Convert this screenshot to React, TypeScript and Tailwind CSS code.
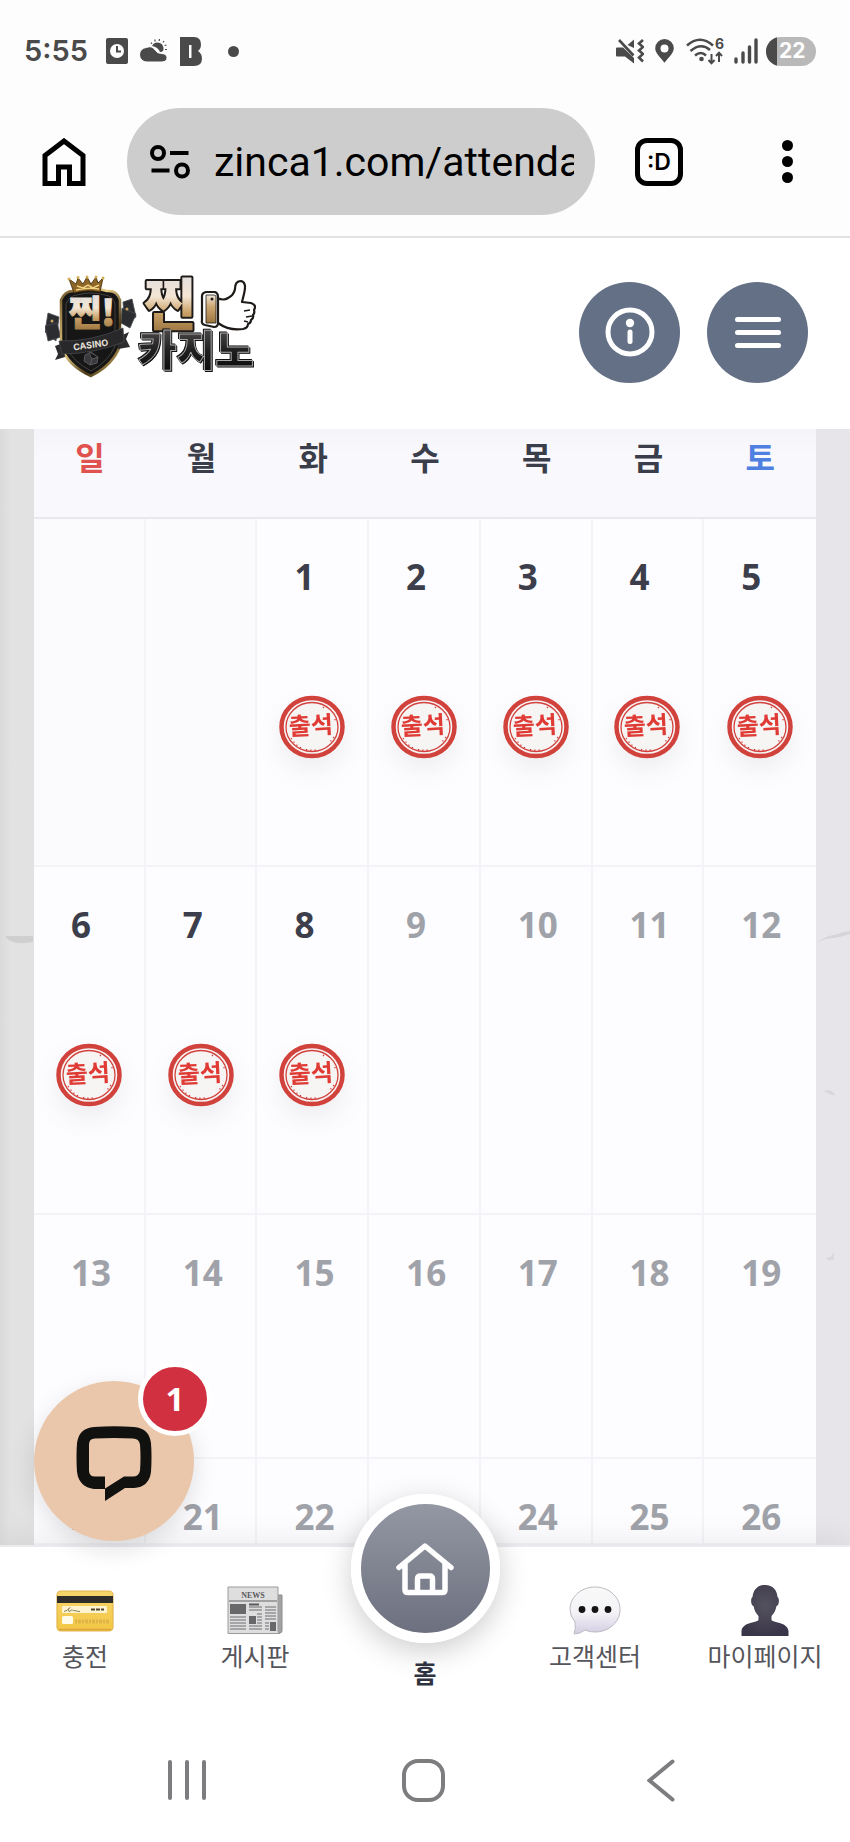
import type { ReactNode } from "react";

type Day = {
  label: string;
  past?: boolean;
  stamped?: boolean;
};

const weekdays = [
  { label: "일", color: "text-[#e0524f]" },
  { label: "월", color: "text-[#3a3d4a]" },
  { label: "화", color: "text-[#3a3d4a]" },
  { label: "수", color: "text-[#3a3d4a]" },
  { label: "목", color: "text-[#3a3d4a]" },
  { label: "금", color: "text-[#3a3d4a]" },
  { label: "토", color: "text-[#4f7fe0]" },
];

const LAST_STAMPED_DAY = 8;

const buildWeek = (start: number): Day[] =>
  Array.from({ length: 7 }, (_, i) => {
    const day = start + i;
    if (day < 1) return { label: "" };
    return {
      label: String(day),
      past: day <= LAST_STAMPED_DAY,
      stamped: day <= LAST_STAMPED_DAY,
    };
  });

const weeks = [
  { days: buildWeek(-1), height: "h-[348px]" },
  { days: buildWeek(6), height: "h-[348px]" },
  { days: buildWeek(13), height: "h-[244px]" },
  { days: buildWeek(20), height: "h-[86px]" },
];

const StatusBar = () => (
  <div className="flex h-[102px] items-center justify-between pl-6 pr-[34px] text-[#4a4a4a]">
    <div className="flex items-center">
      <span className="w-[82px] font-['Inter',sans-serif] text-[29px] font-semibold leading-8">5:55</span>
      <svg className="h-[26px] w-[22px]" viewBox="0 0 22 26" fill="currentColor">
        <rect width="22" height="26" rx="2" />
        <circle cx="11" cy="13" r="7" fill="#fff" />
        <path d="M11 8v5.500h4" fill="none" stroke="currentColor" strokeWidth="2" />
      </svg>
      <svg className="ml-3 h-[26px] w-[28px]" viewBox="0 0 28 26" fill="currentColor">
        <path d="M12 8a6 6 0 0 1 11 5q-1 1-3 1-2-5-8-6z" />
        <path
          d="M11 4.500l1 1.500M15 1.500v2M19.500 1l-.3 2M24 3l-1 1.500M26.500 7l-2 .5M27 11.500h-2"
          stroke="currentColor"
          strokeWidth="1.200"
        />
        <path
          d="M7 24a7 7 0 0 1-.5-14.500Q12 7 15.500 12.500 17 15.500 22 15.500q5 .5 5 4.300T22 24z"
          stroke="#fdfdfd"
          strokeWidth="1"
        />
      </svg>
      <svg className="ml-3 h-[29px] w-[22px]" viewBox="0 0 22 29" fill="currentColor">
        <path
          fillRule="evenodd"
          d="M0 0h14q7 0 7 7.500 0 4-3 6.500 4 2.500 4 7.500 0 7.500-8 7.500H0zM9 8v13h2.500V8z"
        />
      </svg>
      <span className="ml-[26px] size-[11px] rounded-full bg-current" />
    </div>
    <div className="flex items-center">
      <svg className="h-[26px] w-[28px]" viewBox="0 0 28 26" fill="none" stroke="currentColor" strokeWidth="2.600">
        <path d="M1 9.500h6l11 10.500v5.500L9 18.500H1q-1 0-1-1v-7q0-1 1-1z" fill="currentColor" stroke="none" />
        <path d="M11.500 7L18 1.500V10z" fill="currentColor" stroke="none" />
        <path d="M3 2l14.500 15.500" />
        <path d="M27 2l-4 3.500 4 3.500-4 3.500 4 3.500-4 3.500 4 4" />
      </svg>
      <svg className="ml-[11px] h-6 w-[19px]" viewBox="0 0 19 24" fill="currentColor">
        <path
          fillRule="evenodd"
          d="M9.500 0a9.300 9.300 0 0 1 9.300 9.300c0 5-5 9-9.300 14.500C5.200 18.300.2 14.300.2 9.300A9.300 9.300 0 0 1 9.500 0zm0 5.500a4 4 0 1 0 0 8 4 4 0 0 0 0-8z"
        />
      </svg>
      <svg className="ml-3 h-9 w-10" viewBox="0 -4 40 36" fill="none" stroke="currentColor" strokeWidth="2.600">
        <path d="M1 8.500Q14-3 27 8.500M4.500 14Q15 5 24 13M9 18.500q6-5 11 0" />
        <circle cx="15.500" cy="22" r="2.300" fill="currentColor" stroke="none" />
        <path d="M25.500 17v9M22.500 23l3 3.300 3-3.300M33 25v-9M30 19l3-3.300 3 3.300" strokeWidth="2" />
        <text x="29" y="12" fill="currentColor" stroke="none" className="font-['Inter',sans-serif] text-[14px] font-bold">
          6
        </text>
      </svg>
      <svg
        className="ml-2 h-[26px] w-6"
        viewBox="0 0 24 26"
        stroke="currentColor"
        strokeWidth="3.400"
        strokeLinecap="round"
      >
        <path d="M2 24v-3M9 24v-9M15.500 24V9M22 24V2" />
      </svg>
      <div className="ml-2 flex h-[29px] w-[50px] items-center overflow-hidden rounded-full bg-[#b9b9b9]">
        <span className="h-full w-[11px] bg-[#4a4a4a]" />
        <span className="pl-[2px] font-['Inter',sans-serif] text-[21px] font-bold leading-7 text-white">22</span>
      </div>
    </div>
  </div>
);

const BrowserBar = () => (
  <div className="flex items-center border-b-2 border-[#e2e2e2] pb-[21px] pl-[42px] pr-[43px] pt-[6px] text-black">
    <button type="button" aria-label="Home">
      <svg className="h-12 w-11" viewBox="0 0 44 48" fill="none" stroke="currentColor" strokeWidth="5">
        <path d="M3 45.500V17.500L22 3l19 14.500v28H27.500V29h-11v16.500z" />
      </svg>
    </button>
    <div className="ml-[41px] flex h-[107px] min-w-0 flex-1 items-center rounded-full bg-[#cdcdcd] pl-[23px] pr-[21px]">
      <svg className="h-[34px] w-10 shrink-0" viewBox="0 0 40 34" fill="none" stroke="currentColor" strokeWidth="4">
        <circle cx="8" cy="8" r="6" />
        <path d="M20 8h18.500M1.500 25.500h18" />
        <circle cx="32" cy="25.500" r="6" />
      </svg>
      <input
        type="text"
        aria-label="Address"
        defaultValue="zinca1.com/attenda"
        className="ml-6 min-w-0 flex-1 bg-transparent font-['Roboto',sans-serif] text-[41px] leading-[52px] outline-none"
      />
    </div>
    <button
      type="button"
      aria-label="Tabs"
      className="ml-10 flex size-12 items-center justify-center rounded-[12px] border-[5px] border-black font-['Inter',sans-serif] text-[23px] font-semibold leading-6"
    >
      :D
    </button>
    <button type="button" aria-label="More" className="ml-[84px] flex w-10 flex-col items-center gap-[5px]">
      <span className="size-[11px] rounded-full bg-black" />
      <span className="size-[11px] rounded-full bg-black" />
      <span className="size-[11px] rounded-full bg-black" />
    </button>
  </div>
);

const Logo = () => (
  <svg className="h-32 w-[211px]" viewBox="0 -8 211 128" role="img" aria-label="찐카지노">
    <defs>
      <linearGradient id="gold" x1="0" y1="0" x2="0" y2="1">
        <stop offset="0.200" stopColor="#e3dedd" />
        <stop offset="0.450" stopColor="#f4e6d4" />
        <stop offset="0.650" stopColor="#c9a166" />
        <stop offset="0.850" stopColor="#a37c47" />
      </linearGradient>
      <linearGradient id="cuff" x1="0" y1="0" x2="0" y2="1">
        <stop offset="0" stopColor="#f0e6d8" />
        <stop offset="0.400" stopColor="#cda873" />
        <stop offset="1" stopColor="#9c743f" />
      </linearGradient>
      <linearGradient id="rim" x1="0" y1="0" x2="1" y2="1">
        <stop offset="0" stopColor="#6e5426" />
        <stop offset="0.400" stopColor="#e8cf86" />
        <stop offset="0.700" stopColor="#4a3818" />
        <stop offset="1" stopColor="#e3c06c" />
      </linearGradient>
      <linearGradient id="coal" x1="0" y1="0" x2="0" y2="1">
        <stop offset="0.200" stopColor="#4d4947" />
        <stop offset="0.550" stopColor="#1f1f20" />
        <stop offset="1" stopColor="#050505" />
      </linearGradient>
    </defs>
    {/* Playing cards */}
    <g fill="#2c2d31" stroke="#4b4c52" strokeWidth="0.800">
      <path d="M3 37l11 4-3 24-11-9z" />
      <path d="M0 50l12-3 4 14-13 4z" />
      <path d="M78 26l9-3 4 18-11 7z" />
      <path d="M77 32l14 6-6 14-9-5z" />
    </g>
    <circle cx="7" cy="45" r="1.500" fill="#c9a45c" />
    <circle cx="82" cy="33" r="1.500" fill="#c9a45c" />
    {/* Shield */}
    <path
      d="M16 24Q20 14 30 15q16-5 32 0 10-1 13 9v46Q68 89 46 100 22 89 16 70z"
      fill="#161616"
      stroke="url(#rim)"
      strokeWidth="2.500"
    />
    <path
      d="M21 28q4-9 11-9 14-4 28 0 8 1 10 9v42q-6 15-24 25Q27 85 21 70z"
      fill="none"
      stroke="#4f4c47"
      strokeWidth="0.800"
    />
    <path d="M29 17L24 3l7 5 2-6 5 6 4-7 4 7 5-7 2 6 5-5-3 14q-13-3-26 1z" fill="#8d6526" stroke="#3f290b" strokeWidth="0.800" />
    <path d="M31 14q12-3 23-1M32 10l6 2 5-3 5 3 6-3" fill="none" stroke="#f0d283" strokeWidth="1.500" />
    <g fill="#d4ad55">
      <circle cx="24" cy="3" r="1.500" />
      <circle cx="33" cy="1.500" r="1.500" />
      <circle cx="42" cy="1" r="1.500" />
      <circle cx="51" cy="1" r="1.500" />
      <circle cx="58" cy="2" r="1.500" />
    </g>
    <text
      x="24"
      y="50"
      fill="url(#gold)"
      stroke="url(#gold)"
      strokeWidth="1"
      className="font-['Noto_Sans_CJK_KR',sans-serif] text-[35px] font-black"
    >
      찐!
    </text>
    <path d="M10 70l8-3 2 14-10 3 3-6zM71 62l13-6-3 7 4 8-12 2z" fill="#2b2b2e" />
    <path d="M14 65Q46 66 78 52l1 14Q48 78 17 78z" fill="#28282b" stroke="#48484c" strokeWidth="0.800" />
    <text
      x="28"
      y="72"
      fill="#e6e0d6"
      transform="rotate(-8 46 68)"
      className="font-['Inter',sans-serif] text-[9px] font-bold"
    >
      CASINO
    </text>
    <path
      d="M40 79l6-3 7 5-1 6-7 2-6-4zM44 77l3 6 6-2M47 83l-2 6"
      fill="#3a3a3e"
      stroke="#65656a"
      strokeWidth="0.800"
    />
    {/* Wordmark */}
    <text
      x="99"
      y="49"
      fill="url(#gold)"
      stroke="#1d1a18"
      strokeWidth="4"
      strokeLinejoin="round"
      className="font-['Noto_Sans_CJK_KR',sans-serif] text-[56px] font-black [paint-order:stroke]"
    >
      찐
    </text>
    <text
      x="93"
      y="90"
      fill="url(#coal)"
      stroke="#a9a9a9"
      strokeWidth="1"
      strokeLinejoin="round"
      className="font-['Noto_Sans_CJK_KR',sans-serif] text-[42px] font-black drop-shadow-[1px_1px_0_#111] [filter:drop-shadow(1px_1px_0_#111)_drop-shadow(-1px_-1px_0_#111)]"
    >
      카지노
    </text>
    {/* Thumb */}
    <g stroke="#1d1a18" strokeWidth="2.200" strokeLinejoin="round">
      <path
        d="M172 22q7 3 11 0 6-3 7-9 0-8 6-8 6 1 3 13l-2 8 9 1q6 2 3 7 1 3-1 5 1 3-2 5 0 3-3 4 0 4-5 5-14 2-25-6z"
        fill="#fff"
      />
      <path d="M157 20q0-3 4-4h9q3 1 3 5v26q0 4-4 4l-9-2q-4-1-3-5z" fill="#fff" />
      <path d="M161 19h8q2 0 2 2v26h-10z" fill="url(#cuff)" strokeWidth="0.800" />
      <path d="M205 34l-6 1M207 40l-6 1M203 46l-4-1" fill="none" strokeWidth="1.500" />
    </g>
    <circle cx="167" cy="23" r="1.500" fill="#1d1a18" />
  </svg>
);

const SiteHeader = () => (
  <header className="flex h-[191px] items-center justify-between bg-white pb-[3px] pl-[45px] pr-[42px]">
    <a href="#home">
      <Logo />
    </a>
    <div className="flex gap-[27px]">
      <button
        type="button"
        aria-label="안내"
        className="flex size-[101px] items-center justify-center rounded-full bg-[#647085]"
      >
        <svg className="size-[50px]" viewBox="0 0 50 50" fill="none" stroke="#fff">
          <circle cx="25" cy="25" r="22" strokeWidth="5" />
          <circle cx="25" cy="16" r="4.200" fill="#fff" stroke="none" />
          <path d="M25 25v9.500" strokeWidth="5" strokeLinecap="round" />
        </svg>
      </button>
      <button
        type="button"
        aria-label="메뉴"
        className="flex size-[101px] flex-col items-center justify-center gap-2 rounded-full bg-[#647085]"
      >
        <span className="h-[5px] w-[46px] rounded-full bg-white" />
        <span className="h-[5px] w-[46px] rounded-full bg-white" />
        <span className="h-[5px] w-[46px] rounded-full bg-white" />
      </button>
    </div>
  </header>
);

const Stamp = () => (
  <svg
    className="mx-auto mt-[98px] h-16 w-[66px] overflow-visible drop-shadow-[0_12px_12px_rgba(0,0,0,0.060)]"
    viewBox="0 0 66 64"
  >
    <ellipse cx="33" cy="32" rx="30.500" ry="29" fill="#f7f4f4" stroke="#d2423c" strokeWidth="4.500" />
    <ellipse cx="33" cy="32" rx="26" ry="24.500" fill="none" stroke="#d2423c" strokeWidth="1.300" />
    <path
      d="M12 43q5 8 12 11M27 54.500q6 1.500 12 0M44 12l2 2M56 24v3M55 42l-4 5"
      fill="none"
      stroke="#d2423c"
      strokeWidth="1.300"
      strokeDasharray="1.300 3"
    />
    <text
      x="32"
      y="39"
      textAnchor="middle"
      fill="#df3a33"
      transform="rotate(-3 33 32)"
      className="font-['Noto_Sans_CJK_KR',sans-serif] text-[24px] font-bold"
    >
      출석
    </text>
  </svg>
);

const Calendar = () => (
  <table className="w-full table-fixed border-separate border-spacing-0 bg-[#fdfcfe]">
    <thead>
      <tr className="h-[90px]">
        {weekdays.map((day) => (
          <th
            key={day.label}
            scope="col"
            className={`border-b-2 border-[#e9e8ec] bg-linear-to-b from-[#f5f4f8] to-[#f9f8fd] to-30% p-0 pt-[5px] align-top font-['Noto_Sans_CJK_KR',sans-serif] text-[32px] font-bold leading-[44px] ${day.color}`}
          >
            {day.label}
          </th>
        ))}
      </tr>
    </thead>
    <tbody>
      {weeks.map((week, w) => (
        <tr key={w} className={week.height}>
          {week.days.map((day, i) => (
            <td
              key={i}
              className={`border-b-2 border-r-2 border-[#f4f3f7] p-0 pt-[38px] align-top last:border-r-0 ${
                day.label ? "bg-[#fdfcfe]" : "bg-[#fbfafd]"
              }`}
            >
              <p
                className={`pl-[37px] font-['Noto_Sans',sans-serif] text-[35px] font-bold leading-10 ${
                  day.past ? "text-[#3c3e4b]" : "text-[#a0a2a9]"
                }`}
              >
                {day.label}
              </p>
              {day.stamped && <Stamp />}
            </td>
          ))}
        </tr>
      ))}
    </tbody>
  </table>
);

const ChatButton = () => (
  <button
    type="button"
    aria-label="채팅"
    className="absolute bottom-1 left-[34px] z-20 flex size-40 items-center justify-center rounded-full bg-[#eac7ab] shadow-[0_8px_24px_rgba(0,0,0,0.120)]"
  >
    <svg className="mt-[5px] size-[76px]" viewBox="0 0 76 76" fill="#11110f">
      <path
        fillRule="evenodd"
        d="M18 1q20-1.500 40 0 15 1 17 16 1 14 0 29-2 15-17 16h-9L29 75V63H18Q3 61 1 46 0 31 1 17 3 2 18 1zM19 12.500q-6 0-6 6v26q0 6 6 6h10v12l19-12h9q6 0 7-6 1-13 0-26-1-6-7-6-19-1-38 0z"
      />
    </svg>
    <span className="absolute -right-[18px] -top-[19px] flex size-[74px] items-center justify-center rounded-full border-[5px] border-white bg-[#d13040] font-['Noto_Sans',sans-serif] text-[33px] font-bold leading-10 text-white">
      1
    </span>
  </button>
);

const CardIcon = () => (
  <svg className="h-14 w-[58px]" viewBox="0 0 58 56">
    <defs>
      <linearGradient id="card" x1="0" y1="0" x2="0" y2="1">
        <stop offset="0" stopColor="#f6d56c" />
        <stop offset="1" stopColor="#f3c744" />
      </linearGradient>
    </defs>
    <rect x="1" y="8" width="56" height="40" rx="4" fill="url(#card)" stroke="#e3b650" strokeWidth="1.200" />
    <path d="M1 13h56v7H1z" fill="#2f2d2a" />
    <rect x="6" y="23" width="45" height="7" rx="1" fill="#fff4cf" />
    <path d="M8 28.500q4-1 6-4-3 2-1 4 3-1 3-2 1 2 3 1 2 1 5 1" fill="none" stroke="#8d8061" />
    <path d="M35 26.500h13" stroke="#51462f" strokeWidth="2" strokeDasharray="4 1" />
    <rect x="6" y="33" width="11" height="8" rx="1.500" fill="#fffbe9" />
    <path d="M19 38.500h34" stroke="#e0b548" strokeWidth="4" strokeDasharray="2 1 3 1" />
    <path d="M3 46.500h52" stroke="#dca53c" strokeWidth="1.500" />
  </svg>
);

const NewsIcon = () => (
  <svg className="h-14 w-[58px]" viewBox="0 0 58 56">
    <path d="M46 12h10v36q0 2-3 2h-7z" fill="#a3a3a4" stroke="#8b8b8c" />
    <path d="M2 4h50v44q0 2 2 2.500H2z" fill="#dededf" stroke="#9a9a9b" />
    <text x="27" y="15" textAnchor="middle" fill="#5a5a5b" className="font-['Liberation_Serif',serif] text-[8px] font-bold">
      NEWS
    </text>
    <path d="M3 18h48" stroke="#8d8d8e" strokeWidth="1.500" />
    <path
      d="M4 34h16M4 37h16M4 40h16M4 43h16M4 46h16M23 24h13M23 27h13M31 31h5M31 34h5M31 37h5M31 40h5M23 43h13M23 46h13M39 24h11M39 27h11M39 30h11M39 33h11M39 36h11M39 40h4M39 43h4M39 46h4"
      stroke="#939395"
      strokeWidth="1.300"
    />
    <path d="M4 21h16v10H4zM23 33h7v8h-7zM44 39h6v9h-6z" fill="#68686a" />
    <path d="M23 21.500h10" stroke="#58585a" strokeWidth="2" />
  </svg>
);

const BubbleIcon = () => (
  <svg className="h-14 w-[52px]" viewBox="0 0 52 56">
    <defs>
      <linearGradient id="bubble" x1="0" y1="0" x2="0" y2="1">
        <stop offset="0" stopColor="#f9f9f9" />
        <stop offset="0.550" stopColor="#f4f2f6" />
        <stop offset="1" stopColor="#d3cde2" />
      </linearGradient>
    </defs>
    <path
      d="M26 4c14 0 25 10 25 22.500S40 49 26 49q-6 0-10-2-5 4-11 4 2-5 1-12Q1 33 1 26.500C1 14 12 4 26 4z"
      fill="url(#bubble)"
      stroke="#bdbac2"
    />
    <g fill="#141414">
      <circle cx="13" cy="26.500" r="3.400" />
      <circle cx="26" cy="26.500" r="3.400" />
      <circle cx="39" cy="26.500" r="3.400" />
    </g>
  </svg>
);

const PersonIcon = () => (
  <svg className="h-14 w-[50px]" viewBox="0 0 50 56">
    <defs>
      <radialGradient id="person" cx="0.500" cy="0.400" r="0.600">
        <stop offset="0" stopColor="#55525f" />
        <stop offset="1" stopColor="#3a3649" />
      </radialGradient>
    </defs>
    <path
      d="M25 2c8 0 12 5 12.500 12 2 1 2 8-1 9-1 5-3 8-5 10v4c2 3 16 2 17 11v5h-47v-5c1-9 15-8 17-11v-4c-2-2-4-5-5-10-3-1-3-8-1-9C13.500 7 17 2 25 2z"
      fill="url(#person)"
    />
  </svg>
);

const TabLink = ({ href, label, children }: { href: string; label: string; children: ReactNode }) => (
  <a href={href} className="flex flex-col items-center text-[#55565c]">
    {children}
    <span className="whitespace-nowrap text-[25px] leading-8">{label}</span>
  </a>
);

const TabBar = () => (
  <nav className="relative z-10 grid h-[173px] grid-cols-5 items-start border-t-2 border-[#ebeaed] bg-white pt-9 font-['Noto_Sans_CJK_KR',sans-serif] shadow-[0_-10px_24px_rgba(0,0,0,0.050)]">
    <TabLink href="#charge" label="충전">
      <CardIcon />
    </TabLink>
    <TabLink href="#board" label="게시판">
      <NewsIcon />
    </TabLink>
    <a href="#home" className="-mt-[89px] flex flex-col items-center text-[#2f3340]">
      <span className="flex size-[149px] items-center justify-center rounded-full border-[10px] border-white bg-linear-to-b from-[#979ba6] to-[#6a6d7c] bg-origin-border shadow-[0_8px_30px_rgba(0,0,0,0.200)]">
        <svg
          className="h-[54px] w-[58px]"
          viewBox="0 0 58 54"
          fill="none"
          stroke="#fff"
          strokeWidth="5.500"
          strokeLinecap="round"
          strokeLinejoin="round"
        >
          <path d="M3 25.500L29 4l26 21.500M9 22v26q0 2.500 3 2.500h34q3 0 3-2.500V22" />
          <path d="M21.500 50V37q0-3 3-3h9q3 0 3 3v13" />
        </svg>
      </span>
      <span className="mt-[13px] text-[25px] font-bold leading-8">홈</span>
    </a>
    <TabLink href="#support" label="고객센터">
      <BubbleIcon />
    </TabLink>
    <TabLink href="#mypage" label="마이페이지">
      <PersonIcon />
    </TabLink>
  </nav>
);

const SystemNav = () => (
  <div className="relative z-10 grid h-[124px] grid-cols-3 place-items-center bg-white pl-[68px] pr-[70px] text-[#7d7d7f]">
    <button type="button" aria-label="Recent apps">
      <svg className="h-10 w-[38px]" viewBox="0 0 38 40" stroke="currentColor" strokeWidth="4" strokeLinecap="round">
        <path d="M2 2v36M19 2v36M36 2v36" />
      </svg>
    </button>
    <button type="button" aria-label="Home screen" className="size-[43px] rounded-[16px] border-4 border-current" />
    <button type="button" aria-label="Back">
      <svg
        className="h-[43px] w-7"
        viewBox="0 0 28 43"
        fill="none"
        stroke="currentColor"
        strokeWidth="4"
        strokeLinecap="round"
      >
        <path d="M25.500 2.500L2.500 21.500l23 19" />
      </svg>
    </button>
  </div>
);

export default function App() {
  return (
    <div className="overflow-x-hidden bg-[#fdfdfd]">
      <StatusBar />
      <BrowserBar />
      <SiteHeader />
      <main className="relative flex bg-[#e4e3e6]">
        <svg
          className="w-[34px] shrink-0 self-stretch bg-linear-to-r from-[#dadada] to-[#e2e2e2] to-30%"
          viewBox="0 0 34 1116"
          preserveAspectRatio="none"
        >
          <path d="M5 507h28v6q-22 4-28-6z" fill="#cfcfcf" />
        </svg>
        <div className="min-w-0 flex-1">
          <Calendar />
        </div>
        <svg
          className="w-[34px] shrink-0 self-stretch bg-[#e7e5ea]"
          viewBox="0 0 34 1116"
          preserveAspectRatio="none"
        >
          <path d="M2 513q8-6 16-7 8-3 16-4v3q-10 3-16 4-8 0-16 4z" fill="#d6d4d9" />
          <path d="M8 662q6-3 12 4-6 1-12-4zM10 828q6 2 8-6v8q-6 4-8-2z" fill="#dad8dd" />
        </svg>
        <ChatButton />
      </main>
      <TabBar />
      <SystemNav />
    </div>
  );
}
